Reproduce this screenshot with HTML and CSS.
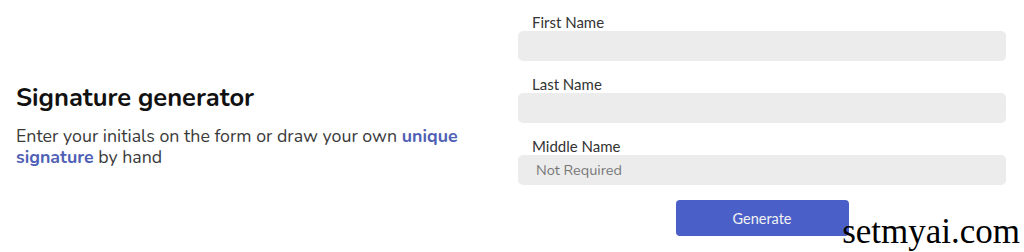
FILE: index.html
```html
<!DOCTYPE html>
<html>
<head>
<meta charset="utf-8">
<link rel="stylesheet" href="styles.css">
</head>
<body>
<div class="page">
  <section class="intro">
    <h1 class="title">Signature generator</h1>
    <p class="lead">Enter your initials on the form or draw your own <a class="link" href="#">unique signature</a> by hand</p>
  </section>
  <form class="form">
    <label class="field">
      <span class="label">First Name</span>
      <input class="input" type="text">
    </label>
    <label class="field">
      <span class="label">Last Name</span>
      <input class="input" type="text">
    </label>
    <label class="field">
      <span class="label">Middle Name</span>
      <input class="input" type="text" placeholder="Not Required">
    </label>
    <div class="actions">
      <button class="btn" type="button">Generate</button>
    </div>
  </form>
</div>
<div class="watermark">setmyai.com</div>
</body>
</html>
```
FILE: styles.css
```css
* { box-sizing: border-box; }
html, body { margin: 0; padding: 0; background: #fff; }
body { width: 1024px; height: 252px; overflow: hidden; position: relative; }
.page {
  display: flex;
  align-items: flex-start;
  padding: 0 18px 0 16px;
  height: 252px;
  gap: 60px;
}
.intro { width: 442px; flex: none; padding-top: 83px; }
.title {
  margin: 0 0 13px;
  font-family: "Nunito", "Lato", sans-serif;
  font-weight: 700;
  font-size: 25.5px;
  line-height: 30px;
  color: #111;
}
.lead {
  margin: 0;
  font-family: "Nunito", "Lato", sans-serif;
  font-size: 17.8px;
  line-height: 20.5px;
  color: #3a3a3a;
}
.link { color: #4f5fb5; font-weight: 700; text-decoration: none; }
.form {
  flex: 1;
  display: flex;
  flex-direction: column;
  padding-top: 14px;
}
.field { display: flex; flex-direction: column; margin-bottom: 15px; }
.label {
  font-family: "Lato", sans-serif;
  font-size: 15px;
  line-height: 17px;
  color: #333;
  padding-left: 14px;
}
.input {
  height: 30px;
  border: none;
  border-radius: 5px;
  background: #ececec;
  padding: 0 18px;
  font-family: "Nunito", "Lato", sans-serif;
  font-size: 14.5px;
  color: #333;
  outline: none;
}
.input::placeholder { color: #777; }
.actions { display: flex; justify-content: center; padding-top: 0; }
.btn {
  width: 173px;
  height: 36px;
  border: none;
  border-radius: 4px;
  background: #4a5fc8;
  color: #f2f2f2;
  font-family: "Lato", sans-serif;
  font-size: 14.5px;
}
.watermark {
  position: absolute;
  right: 4px;
  bottom: 2px;
  font-family: "Liberation Serif", serif;
  font-size: 35px;
  color: #000;
  line-height: 36px;
}
```
